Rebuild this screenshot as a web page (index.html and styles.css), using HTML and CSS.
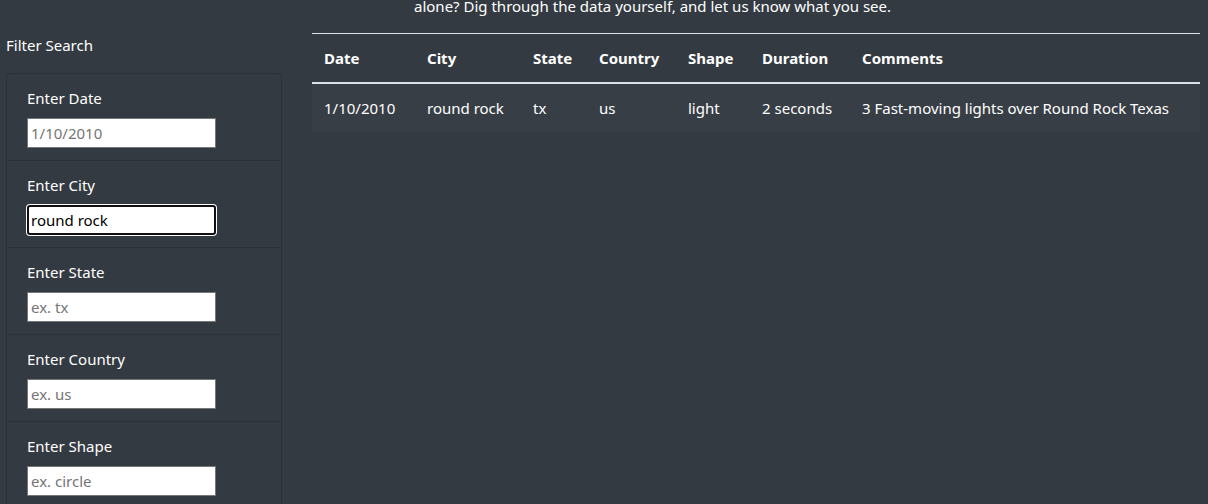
FILE: index.html
```html
<!DOCTYPE html>
<html lang="en">
<head>
<meta charset="utf-8">
<title>UFO Sightings</title>
<link rel="stylesheet" href="styles.css">
</head>
<body>
<p class="intro">alone? Dig through the data yourself, and let us know what you see.</p>
<div class="layout">
  <aside class="sidebar">
    <h5 class="filter-title">Filter Search</h5>
    <ul class="filters">
      <li class="filter-item">
        <label class="filter-label" for="date">Enter Date</label>
        <input class="filter-input" id="date" type="text" placeholder="1/10/2010">
      </li>
      <li class="filter-item">
        <label class="filter-label" for="city">Enter City</label>
        <input class="filter-input is-focused" id="city" type="text" value="round rock">
      </li>
      <li class="filter-item">
        <label class="filter-label" for="state">Enter State</label>
        <input class="filter-input" id="state" type="text" placeholder="ex. tx">
      </li>
      <li class="filter-item">
        <label class="filter-label" for="country">Enter Country</label>
        <input class="filter-input" id="country" type="text" placeholder="ex. us">
      </li>
      <li class="filter-item">
        <label class="filter-label" for="shape">Enter Shape</label>
        <input class="filter-input" id="shape" type="text" placeholder="ex. circle">
      </li>
    </ul>
  </aside>
  <main class="main">
    <table class="ufo-table">
      <colgroup>
        <col class="c-date"><col class="c-city"><col class="c-state"><col class="c-country"><col class="c-shape"><col class="c-duration"><col>
      </colgroup>
      <thead>
        <tr>
          <th>Date</th><th>City</th><th>State</th><th>Country</th><th>Shape</th><th>Duration</th><th>Comments</th>
        </tr>
      </thead>
      <tbody>
        <tr>
          <td>1/10/2010</td><td>round rock</td><td>tx</td><td>us</td><td>light</td><td>2 seconds</td><td>3 Fast-moving lights over Round Rock Texas</td>
        </tr>
      </tbody>
    </table>
  </main>
</div>
</body>
</html>
```

FILE: styles.css
```css
* { box-sizing: border-box; }

html, body {
  margin: 0;
  padding: 0;
  background: #343a41;
  color: #ffffff;
  font-family: "Noto Sans", "Open Sans", sans-serif;
  font-size: 15px;
  line-height: 24px;
  overflow: hidden;
}

.intro {
  margin: -6px 0 0 0;
  padding-left: 414px;
  height: 39px;
  line-height: 24px;
  font-size: 15px;
}

.layout {
  display: grid;
  grid-template-columns: 276px 888px;
  column-gap: 30px;
  padding: 0 8px 0 6px;
}

.filter-title {
  margin: 0 0 16px 0;
  font-weight: 400;
  font-size: 15px;
  line-height: 24px;
}

.filters {
  list-style: none;
  margin: 0;
  padding: 0;
  border: 1px solid rgba(0, 0, 0, 0.14);
  border-radius: 4px;
}

.filter-item {
  display: flex;
  flex-direction: column;
  align-items: flex-start;
  padding: 12px 20px;
  border-bottom: 1px solid rgba(0, 0, 0, 0.14);
}

.filter-label {
  margin-bottom: 8px;
  line-height: 24px;
}

.filter-input {
  width: 189px;
  height: 30px;
  margin: 0;
  padding: 1px 3px;
  border: 1px solid #767676;
  background: #fff;
  color: #000;
  font-family: inherit;
  font-size: 15px;
}

.filter-input::placeholder { color: #757575; }

.filter-input.is-focused {
  border: 2px solid #101010;
  border-radius: 3px;
  box-shadow: 0 0 0 1px #ffffff;
  outline: none;
  padding: 0 2px;
}

.ufo-table {
  width: 100%;
  border-collapse: collapse;
  table-layout: fixed;
}

.c-date { width: 103px; }
.c-city { width: 106px; }
.c-state { width: 66px; }
.c-country { width: 89px; }
.c-shape { width: 74px; }
.c-duration { width: 100px; }

.ufo-table th,
.ufo-table td {
  padding: 12px 12px;
  text-align: left;
  white-space: nowrap;
  line-height: 24px;
}

.ufo-table th {
  font-weight: 700;
  border-top: 1px solid #dee2e6;
  border-bottom: 2px solid #dee2e6;
}

.ufo-table tbody tr {
  background: rgba(255, 255, 255, 0.025);
}
```
